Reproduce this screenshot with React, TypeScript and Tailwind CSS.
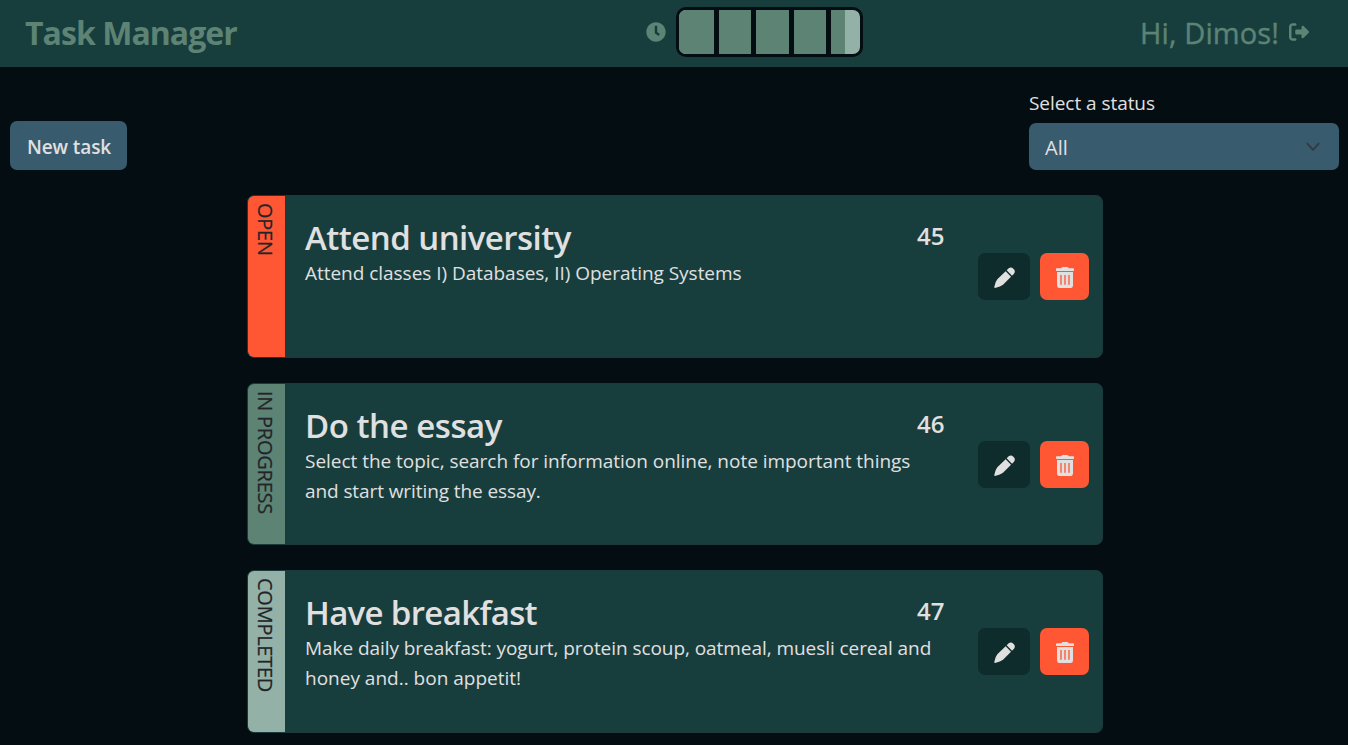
import { FaClock } from "react-icons/fa";
import { FaRightFromBracket } from "react-icons/fa6";

type Task = {
  id: number;
  status: string;
  statusClass: string;
  title: string;
  titleClass: string;
  lines: { text: string; className: string }[];
};

const tasks: Task[] = [
  {
    id: 45,
    status: "OPEN",
    statusClass: "bg-[#ff5733]",
    title: "Attend university",
    titleClass: "tracking-[-0.54px]",
    lines: [{ text: "Attend classes I) Databases, II) Operating Systems", className: "tracking-[-0.03px]" }],
  },
  {
    id: 46,
    status: "IN PROGRESS",
    statusClass: "bg-[#5c8374]",
    title: "Do the essay",
    titleClass: "tracking-[-0.46px]",
    lines: [
      { text: "Select the topic, search for information online, note important things", className: "tracking-[-0.03px]" },
      { text: "and start writing the essay.", className: "tracking-[-0.09px]" },
    ],
  },
  {
    id: 47,
    status: "COMPLETED",
    statusClass: "bg-[#93b1a6]",
    title: "Have breakfast",
    titleClass: "tracking-[-0.66px]",
    lines: [
      { text: "Make daily breakfast: yogurt, protein scoup, oatmeal, muesli cereal and", className: "tracking-[-0.06px]" },
      { text: "honey and.. bon appetit!", className: "tracking-[0px]" },
    ],
  },
];

function PencilIcon() {
  return (
    <svg className="size-[21px]" viewBox="0 0 63 63" fill="currentColor">
      <path d="M35 13 51 29 27 53Q20 59 3 63 0 63 1 59 4 44 10 37Z" />
      <path d="M38 10 44 4Q51-2 58 5 66 12 60 20L54 26Z" />
    </svg>
  );
}

function TrashIcon() {
  return (
    <svg className="h-[21px] w-[18px]" viewBox="0 0 54 63" fill="currentColor" fillRule="evenodd">
      <path d="M16 4 18 1Q19 0 21 0H33Q35 0 36 1L38 4H52Q54 4 54 6V10Q54 12 52 12H2Q0 12 0 10V6Q0 4 2 4Z" />
      <path d="M3 15H51V56Q50 63 44 63H10Q4 63 3 56ZM13 24V53H17V24ZM25 24V53H29V24ZM37 24V53H41V24Z" />
    </svg>
  );
}

function Navbar() {
  return (
    <header className="flex h-[67px] items-center bg-[#183d3d] text-[#5c8374]">
      <div className="w-[646px] pb-0.5 pl-[25px]">
        <span className="text-[32px] leading-[40px] font-bold tracking-[-0.95px]">Task Manager</span>
      </div>
      <FaClock className="-mt-1 size-5" />
      <div className="-mt-[3px] ml-[10px] flex h-[50px] w-[187px] overflow-hidden rounded-[10px] border-[3px] border-[#040d12] bg-[#93b1a6]">
        <div className="w-10 border-r-[5px] border-[#040d12] bg-[#5c8374]" />
        <div className="w-[37px] border-r-[5px] border-[#040d12] bg-[#5c8374]" />
        <div className="w-[38px] border-r-[5px] border-[#040d12] bg-[#5c8374]" />
        <div className="w-[37px] border-r-[5px] border-[#040d12] bg-[#5c8374]" />
        <div className="w-[14px] bg-[#5c8374]" />
      </div>
      <div className="ml-auto flex items-center gap-[10px] pr-[39px]">
        <span className="pb-0.5 text-[29px] leading-[40px] font-medium tracking-[0.1px] [-webkit-text-stroke:0.4px_currentColor]">Hi, Dimos!</span>
        <FaRightFromBracket className="-mt-1 size-5" />
      </div>
    </header>
  );
}

function TaskCard({ task }: { task: Task }) {
  return (
    <article className="flex h-[162.5px] w-[856px] overflow-hidden rounded-[7px] border border-[#1b3a3b] bg-[#183d3d]">
      <div className={`flex w-[37px] shrink-0 flex-col items-start pt-[7px] pr-[5px] text-[20px] leading-[30px] tracking-[-0.25px] text-[#212529] [writing-mode:vertical-rl] [-webkit-text-stroke:0.2px_currentColor] ${task.statusClass}`}>
        <span>{task.status}</span>
      </div>
      <div className="w-[632px] shrink-0 pt-6 pl-5">
        <h2 className={`mb-0.5 text-[33px] leading-[36px] font-semibold whitespace-nowrap ${task.titleClass}`}>{task.title}</h2>
        {task.lines.map((line) => (
          <p key={line.text} className={`text-[19px] leading-[30px] whitespace-nowrap ${line.className}`}>
            {line.text}
          </p>
        ))}
      </div>
      <div className="w-[61px] pt-[25px] text-[24px] leading-[30px] font-semibold">{task.id}</div>
      <div className="flex items-start gap-[10px] pt-[57px]">
        <button className="flex h-[47px] w-[52px] items-center justify-center rounded-[7px] bg-[#0f2c2c] pt-0.5">
          <PencilIcon />
        </button>
        <button className="flex h-[47px] w-[49px] items-center justify-center rounded-[7px] bg-[#ff5733] pt-0.5">
          <TrashIcon />
        </button>
      </div>
    </article>
  );
}

export default function App() {
  return (
    <div className="h-[745px] overflow-hidden bg-[#040d12] font-['Open_Sans','Noto_Sans',sans-serif] text-[#e0e0e0]">
      <Navbar />
      <div className="flex h-[103px] items-end justify-between pr-[9px] pl-[10px]">
        <button className="h-[49px] w-[117px] rounded-[7px] bg-[#395b6e] pt-0.5 pl-px text-[19px] leading-[30px] font-semibold tracking-[-0.1px]">New task</button>
        <div className="w-[310px]">
          <div className="mb-[5px] text-[19px] leading-[30px] tracking-[-0.05px]">Select a status</div>
          <div className="flex h-[47px] items-center justify-between rounded-[7px] bg-[#395b6e] pr-[17px] pl-4 text-[20px]">
            <span className="pt-0.5">All</span>
            <svg className="size-[18px]" viewBox="0 0 16 16" fill="none" stroke="#343a40" strokeWidth="1.7" strokeLinecap="round" strokeLinejoin="round">
              <path d="m3 5 5 5.5L13 5" />
            </svg>
          </div>
        </div>
      </div>
      <main className="flex flex-col items-center gap-[25px] pt-[25px] pl-[2px]">
        {tasks.map((task) => (
          <TaskCard key={task.id} task={task} />
        ))}
      </main>
    </div>
  );
}
